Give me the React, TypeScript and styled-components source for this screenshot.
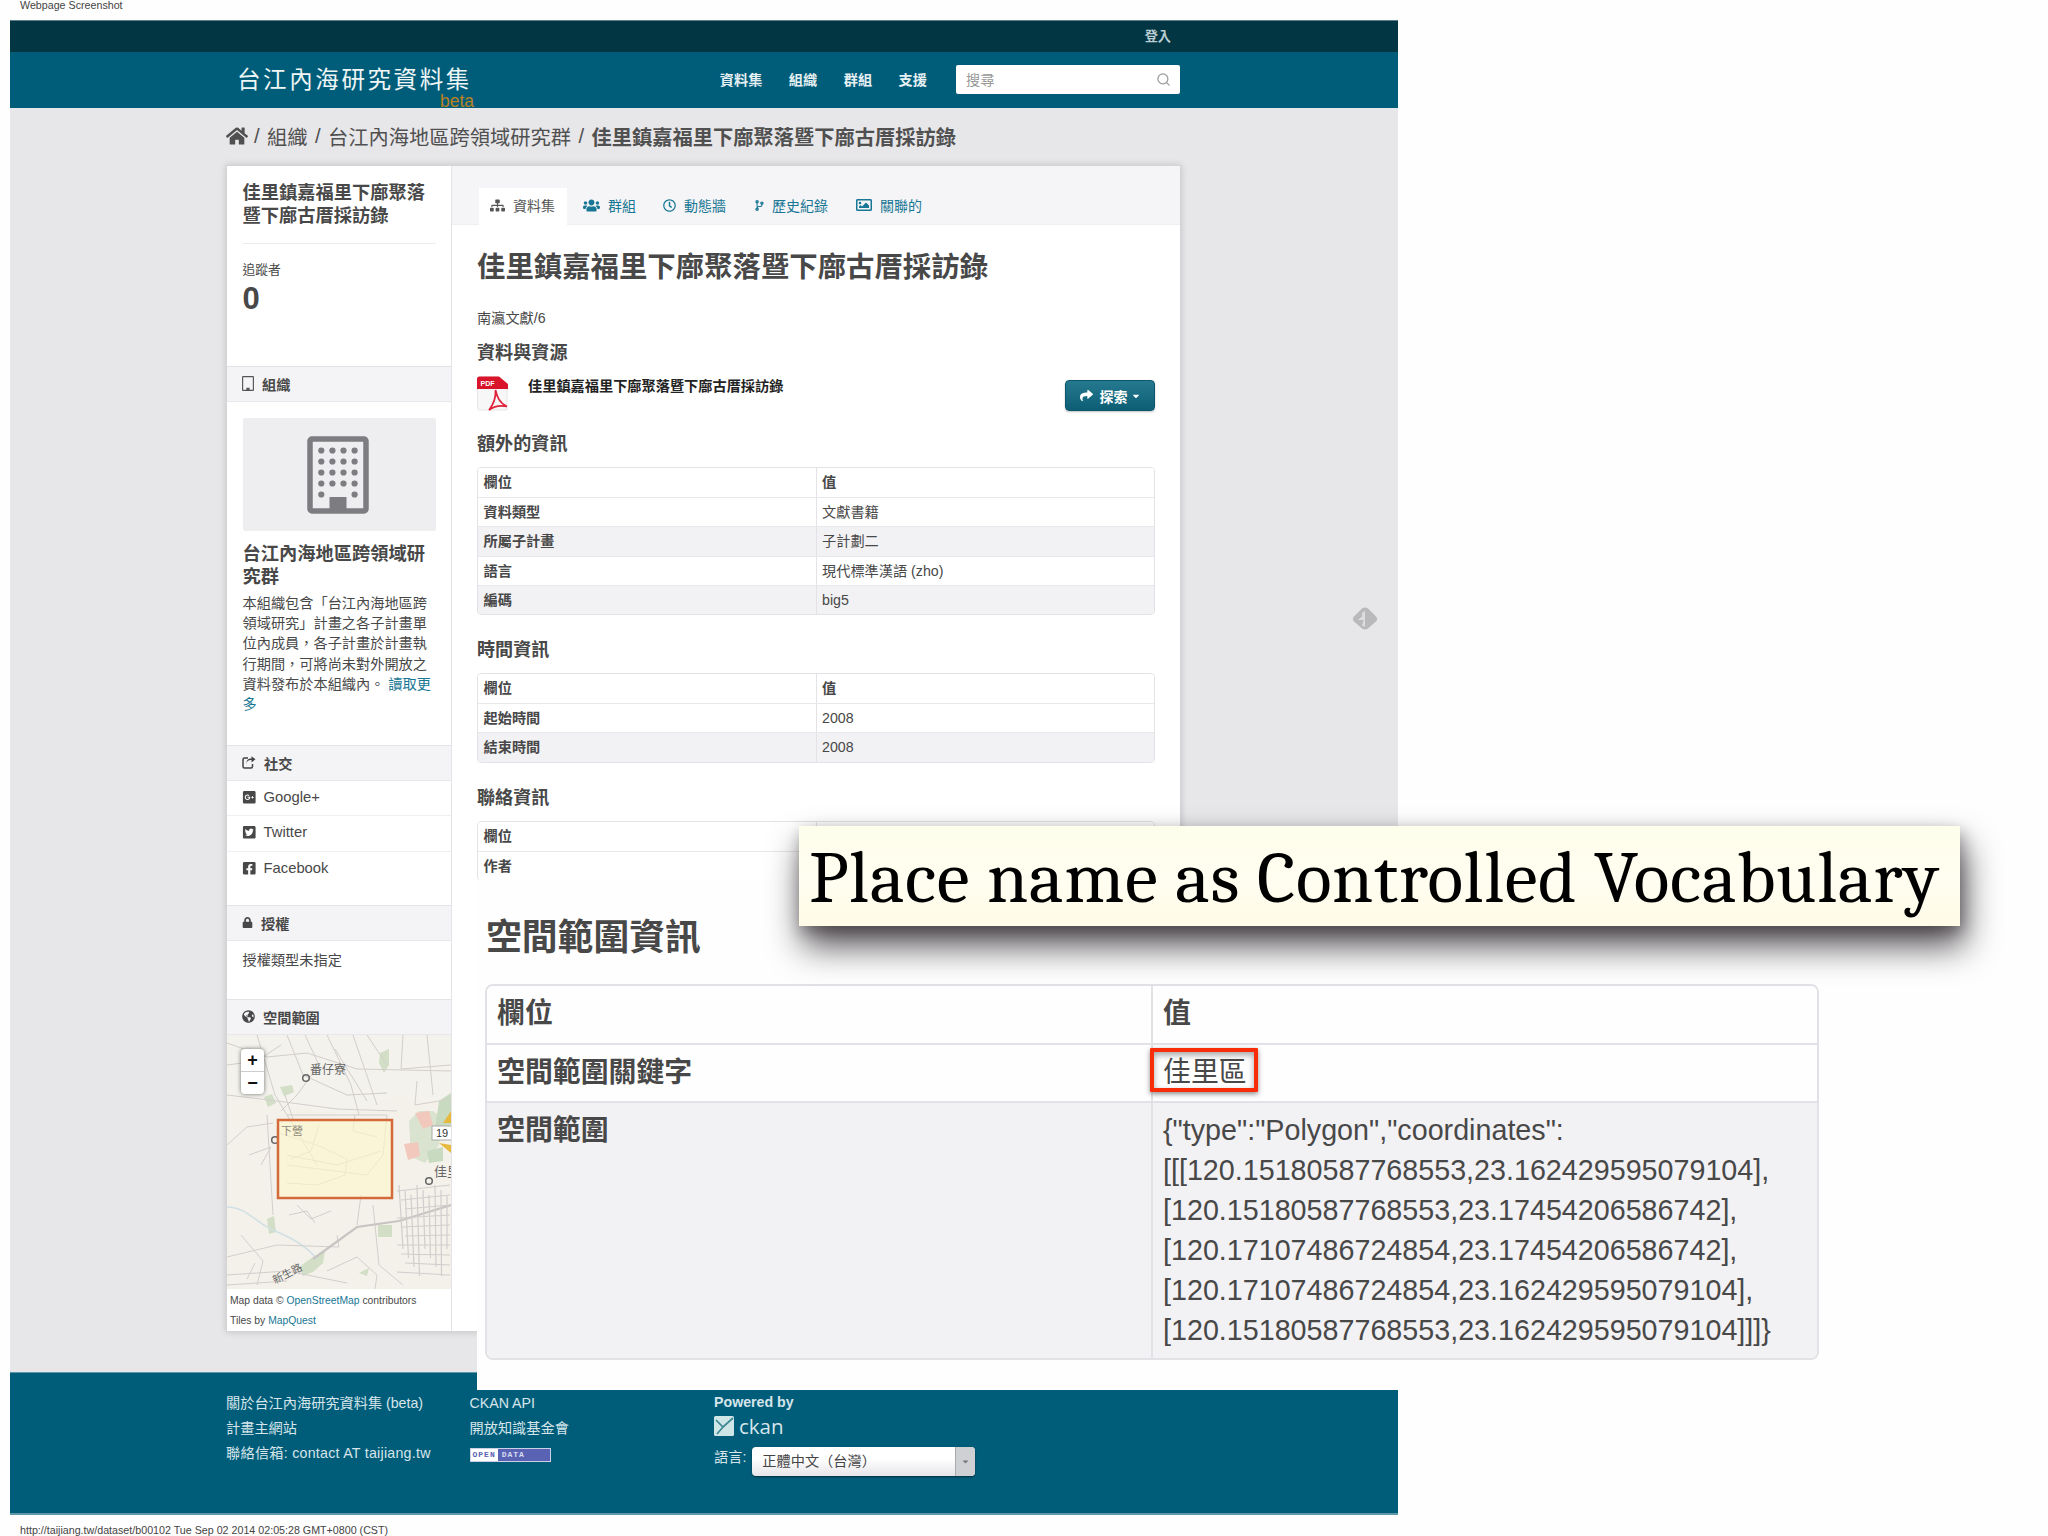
import React from 'react';
import styled, { createGlobalStyle } from 'styled-components';
import {
  FaHome, FaSitemap, FaUsers, FaRegClock, FaCodeBranch, FaRegImage, FaShare,
  FaGooglePlusSquare, FaTwitterSquare, FaFacebookSquare, FaLock, FaGlobeAmericas, FaCaretDown,
} from 'react-icons/fa';
import { FiSearch } from 'react-icons/fi';

const Global = createGlobalStyle`
  * { box-sizing: border-box; }
  body { margin: 0; background: #fff; overflow: hidden; }
`;

const Slide = styled.main`
  position: relative;
  width: 2048px;
  height: 1536px;
  overflow: hidden;
  display: flex;
  flex-direction: column;
  background: #fefefe;
  color: #484848;
  font-family: 'Liberation Sans', 'Noto Sans CJK TC', sans-serif;
  font-size: 14.2px;
`;

const PrintNote = styled.div<{ $h: number; $center: number }>`
  height: ${p => p.$h}px;
  padding-left: 20px;
  font-size: 10.7px;
  line-height: ${p => p.$center * 2}px;
  color: #444;
  white-space: nowrap;
`;

const Site = styled.div`
  width: 1388px;
  height: 1495px;
  margin-left: 10px;
  background: #e7e6e9;
  display: flex;
  flex-direction: column;
`;

const AccountBar = styled.div`
  height: 32px;
  flex: none;
  background: #033643;
  border-top: 1px solid #5b7d86;
  display: flex;
  justify-content: flex-end;
  padding-right: 227px;
  line-height: 31px;
  font-size: 13.2px;
  font-weight: 700;
  color: #b9cdd2;
`;

const Masthead = styled.header`
  height: 56px;
  flex: none;
  background: #005d7a;
  display: flex;
  justify-content: space-between;
  padding: 0 218px 0 227px;
`;

const Brand = styled.div`
  width: 240px;
  color: #eef6f6;
  font-size: 23.5px;
  letter-spacing: 2.6px;
  line-height: 30px;
  padding-top: 13px;
  white-space: nowrap;
`;

const Beta = styled.div`
  color: #b9821f;
  font-size: 17.5px;
  letter-spacing: 0;
  line-height: 13px;
  text-align: right;
  padding-right: 3px;
`;

const HeaderRight = styled.div`
  display: flex;
  padding-top: 13px;
`;

const Nav = styled.nav`
  display: flex;
  gap: 26.5px;
  margin-right: 29px;
  line-height: 30px;
  font-size: 14.2px;
  font-weight: 700;
  color: #e6f0f3;
`;

const Search = styled.div`
  width: 224px;
  height: 29px;
  background: #fff;
  border-radius: 2px;
  display: flex;
  align-items: center;
  justify-content: space-between;
  padding: 0 9px 1px 10px;
  color: #999;
`;

const Crumbs = styled.div`
  height: 58px;
  flex: none;
  padding: 0 0 2px 216px;
  display: flex;
  align-items: center;
  font-size: 20.25px;
  color: #505050;
  white-space: nowrap;
  svg { font-size: 22px; margin-right: -1.5px; }
  b { font-weight: 700; }
`;

const Slash = styled.span`
  width: 20.5px;
  text-align: center;
`;

const Card = styled.div`
  width: 953px;
  height: 1165px;
  flex: none;
  margin-left: 217px;
  background: #fff;
  box-shadow: 0 0 0 1px #d4d3d6, 0 0 7px 1px rgba(0, 0, 0, 0.16);
  display: flex;
`;

const Sidebar = styled.aside`
  width: 225px;
  flex: none;
  border-right: 1px solid #e4e3e7;
  display: flex;
  flex-direction: column;
`;

const Module = styled.section<{ $h: number; $pt?: number }>`
  height: ${p => p.$h}px;
  flex: none;
  padding: ${p => p.$pt ?? 0}px 15px 0 15.5px;
`;

const SideHead = styled.h3`
  height: 36px;
  flex: none;
  margin: 0;
  padding: 0 0 1px 15px;
  background: #f4f3f6;
  border-top: 1px solid #e3e2e6;
  border-bottom: 1px solid #e8e7eb;
  display: flex;
  align-items: center;
  gap: 8px;
  font-size: 14.2px;
  font-weight: 700;
`;

const SideTitle = styled.h2`
  margin: 0;
  font-size: 18.25px;
  font-weight: 700;
  line-height: 23.4px;
`;

const Followers = styled.dl`
  margin: 15px 0 0;
  border-top: 1px solid #ececef;
  padding-top: 16px;
  dt { font-size: 12.8px; line-height: 20px; }
  dd { margin: 0; font-size: 31px; font-weight: 700; line-height: 37px; }
`;

const OrgImage = styled.div`
  height: 113px;
  background: #eeedf0;
  border-radius: 2px;
  display: flex;
  justify-content: center;
  padding: 18px 3px 0 0;
  margin-bottom: 11px;
`;

const Blurb = styled.p`
  margin: 4px -4px 0 0;
  line-height: 20.3px;
  font-size: 14.2px;
`;

const Link = styled.a`
  color: #187794;
`;

const SocialItem = styled.div<{ $last?: boolean }>`
  height: 35.3px;
  flex: none;
  padding: 0 0 2px 15px;
  border-bottom: ${p => (p.$last ? 'none' : '1px solid #efeef1')};
  display: flex;
  align-items: center;
  gap: 7px;
  font-size: 14.8px;
  svg { font-size: 14.5px; }
`;

const MapBox = styled.div`
  height: 254px;
  flex: none;
  position: relative;
  svg.map { display: block; }
`;

const ZoomControl = styled.div`
  position: absolute;
  left: 14px;
  top: 14px;
  width: 23px;
  background: #fff;
  border-radius: 4px;
  box-shadow: 0 0 4px rgba(0, 0, 0, 0.55);
  font: 700 18px/22px 'Liberation Sans', sans-serif;
  text-align: center;
  color: #111;
  div + div { border-top: 1px solid #ccc; }
`;

const Attribution = styled.div`
  padding: 2px 0 0 3px;
  font-size: 10.35px;
  line-height: 20px;
  white-space: nowrap;
`;

const Main = styled.div`
  flex: 1;
  display: flex;
  flex-direction: column;
`;

const Tabs = styled.div`
  height: 59px;
  flex: none;
  background: #f5f4f7;
  border-bottom: 1px solid #efeef1;
  padding: 22px 0 0 27px;
  display: flex;
`;

const Tab = styled.div<{ $w: number; $gap?: number; $active?: boolean }>`
  width: ${p => p.$w}px;
  height: 37px;
  flex: none;
  padding-left: ${p => (p.$active ? 11 : 0)}px;
  padding-bottom: 3px;
  margin-right: ${p => (p.$active ? 16 : 0)}px;
  background: ${p => (p.$active ? '#fff' : 'transparent')};
  color: ${p => (p.$active ? '#555' : '#187794')};
  display: flex;
  align-items: center;
  gap: ${p => p.$gap ?? 8}px;
  font-size: 14px;
  white-space: nowrap;
`;

const Content = styled.article`
  padding: 0 24px 0 25px;
`;

const Title = styled.h1`
  margin: 23px 0 0;
  font-size: 28.4px;
  font-weight: 700;
  line-height: 38px;
  white-space: nowrap;
`;

const Notes = styled.p`
  margin: 22px 0 0;
  line-height: 20px;
`;

const H2 = styled.h2<{ $mt: number }>`
  margin: ${p => p.$mt}px 0 0;
  font-size: 18.1px;
  font-weight: 700;
  line-height: 24px;
`;

const Resource = styled.div`
  height: 52px;
  padding-top: 11px;
  display: flex;
  color: #222;
  svg.pdf { flex: none; }
  strong { font-weight: 700; margin-left: 20px; line-height: 21px; flex: 1; }
`;

const Explore = styled.button`
  width: 90px;
  height: 31px;
  margin: 4px 1px 0 0;
  padding: 0;
  border: 1px solid #0c566b;
  border-radius: 4px;
  background: linear-gradient(#25798f, #0d5e75);
  box-shadow: 0 1px 2px rgba(0, 0, 0, 0.25);
  color: #fff;
  font: 700 14px 'Liberation Sans', 'Noto Sans CJK TC', sans-serif;
  display: flex;
  align-items: center;
  justify-content: center;
  gap: 7px;
  svg + span + svg { margin-left: -4px; font-size: 10px; }
`;

const Table = styled.div`
  margin-top: 11px;
  width: 678px;
  border: 1px solid #e4e2e6;
  border-radius: 4px;
  overflow: hidden;
`;

const Row = styled.div<{ $striped?: boolean; $head?: boolean }>`
  height: 29.2px;
  display: grid;
  grid-template-columns: 338px 1fr;
  line-height: 28px;
  background: ${p => (p.$striped ? '#f2f1f4' : '#fff')};
  & + & { border-top: 1px solid #e9e7eb; }
  span { padding-left: 5.500px; }
  span:first-child { font-weight: 700; }
  span + span { border-left: 1px solid #e4e2e6; padding-left: 5px; font-weight: ${p => (p.$head ? 700 : 400)}; }
`;

const Footer = styled.footer`
  height: 143px;
  flex: none;
  margin-top: auto;
  background: #005d7a;
  border-top: 1px solid #5f98ab;
  border-bottom: 2px solid #5f98ab;
  padding: 17.500px 0 0 216px;
  display: grid;
  grid-template-columns: 243.500px 244.5px 1fr;
  color: #d6e5ea;
  font-size: 14.2px;
  line-height: 25px;
  white-space: nowrap;
`;

const FooterCol = styled.div`
  b { display: block; line-height: 23px; }
`;

const Contact = styled.span`
  letter-spacing: 0.26px;
`;

const OpenData = styled.div`
  width: 81px;
  height: 14px;
  margin-top: 7px;
  border: 1px solid #c9cfe4;
  background: #5a62b3;
  display: flex;
  font: 700 8px/12px 'Liberation Mono', monospace;
  letter-spacing: 1px;
  color: #d8dcf2;
  span { background: #fff; color: #5a62b3; padding: 0 2px; margin-right: 4px; }
`;

const Ckan = styled.div`
  display: flex;
  align-items: center;
  gap: 5px;
  height: 25px;
  font-family: 'Open Sans', sans-serif;
  font-size: 20.5px;
`;

const Lang = styled.div`
  display: flex;
  gap: 6px;
  margin-top: 8px;
  line-height: 21px;
`;

const Select = styled.div`
  width: 223px;
  height: 29px;
  border-radius: 4px;
  background: linear-gradient(#fff 40%, #e6e6ea);
  box-shadow: 0 1px 2px rgba(0, 0, 0, 0.5);
  color: #444;
  display: flex;
  justify-content: space-between;
  padding-left: 10px;
  line-height: 28px;
  overflow: hidden;
  i { width: 20px; background: #cfd0d4; border-left: 1px solid #aaa; display: grid; place-items: center; font-size: 9px; color: #777; }
`;

const FeedbackMark = styled.svg`
  position: absolute;
  left: 1351px;
  top: 606px;
`;

/* Enlarged excerpt laid over the page */
const Excerpt = styled.section`
  position: absolute;
  left: 477px;
  top: 880px;
  width: 1400px;
  height: 510px;
  background: #fefefe;
  padding: 34px 0 0 8px;
  h2 { margin: 0 0 22px 1px; font-size: 35.8px; font-weight: 700; line-height: 48px; }
`;

const BigTable = styled.div`
  width: 1334px;
  height: 376px;
  border: 2px solid #e2e1e5;
  border-radius: 8px;
  overflow: hidden;
  font-size: 27.9px;
`;

const BigRow = styled.div<{ $h: number; $striped?: boolean; $head?: boolean }>`
  height: ${p => p.$h}px;
  display: grid;
  grid-template-columns: 664px 1fr;
  line-height: 40px;
  background: ${p => (p.$striped ? '#f2f1f4' : '#fefefe')};
  & + & { border-top: 2px solid #e2e1e5; }
  > div { padding: 8px 0 0 10px; }
  > div:first-child { font-weight: 700; }
  > div + div { border-left: 2px solid #e2e1e5; font-weight: ${p => (p.$head ? 700 : 400)}; }
`;

const Coords = styled.pre`
  margin: -1px 0 0;
  font: 28.7px/40px 'Liberation Sans', sans-serif;
`;

const RedBox = styled.div`
  position: absolute;
  left: 1150px;
  top: 1048px;
  width: 108px;
  height: 44px;
  border: 4px solid #f92c0a;
  border-radius: 1px;
  box-shadow: 0 2px 5px rgba(0, 0, 0, 0.45), inset 0 3px 6px rgba(0, 0, 0, 0.35);
`;

const Callout = styled.div`
  position: absolute;
  left: 799px;
  top: 826px;
  width: 1161px;
  height: 100px;
  background: linear-gradient(#fefeec, #fffdf0 60%, #fffbe6);
  box-shadow: 4px 20px 34px rgba(20, 14, 20, 0.72), 2px 6px 14px rgba(20, 14, 20, 0.3);
  color: #000;
  font-family: Cambria, Caladea, 'Liberation Serif', serif;
  font-size: 74px;
  letter-spacing: 0.6px;
  line-height: 104px;
  padding-left: 10px;
  white-space: nowrap;
`;

const TITLE = '佳里鎮嘉福里下廍聚落暨下廍古厝採訪錄';

const Building = ({ w, h, small }: { w: number; h: number; small?: boolean }) => (
  <svg width={w} height={h} viewBox="0 0 62 78">
    <rect x="3" y="3" width="56" height="72" rx="2" fill="none" stroke={small ? '#555' : '#7d7c80'} strokeWidth={small ? 6 : 5.5} />
    {!small && [0, 1, 2, 3, 4].map(r => [0, 1, 2, 3].map(c => (
      (r < 4 || c === 0 || c === 3) && <circle key={`${r}${c}`} cx={14.3 + c * 11.1} cy={14.5 + r * 11} r="3.1" fill="#7d7c80" />
    )))}
    <rect x="22.5" y="61" width="17" height="15" fill={small ? '#555' : '#7d7c80'} />
  </svg>
);

const PdfIcon = () => (
  <svg className="pdf" width="31" height="35" viewBox="0 0 31 35">
    <path d="M.5 3V32a2 2 0 0 0 2 2H30V10L20 1H3A2.500 2.500 0 0 0 .5 3Z" fill="#f8f7f8" stroke="#e6e5e7" />
    <path d="M0 13V3A2.500 2.500 0 0 1 2.500.5H22L31 8V13Z" fill="#d9152b" />
    <text x="3.500" y="9.500" fontSize="7" fontWeight="700" fontFamily="Liberation Sans, sans-serif" fill="#fff">PDF</text>
    <path d="M18.500 14C20 20 22 27 30 30.500C23 29 16 31 12 34C16 29 19 22 18.500 14Z" fill="none" stroke="#e0233a" strokeWidth="1.700" />
  </svg>
);

const ShareIcon = () => (
  <svg width="14" height="13" viewBox="0 0 14 13" fill="none" stroke="#444" strokeWidth="1.500">
    <path d="M6 2H2.500A1.500 1.500 0 0 0 1 3.500V10.500A1.500 1.500 0 0 0 2.500 12H9A1.500 1.500 0 0 0 10.500 10.500V8" />
    <path d="M4.500 8C4.500 5 6.500 4 9.500 4V6.500L13.500 3.200L9.500.3V2.500C6 2.500 4 4.500 4.500 8Z" fill="#444" stroke="none" />
  </svg>
);

const streets: string[] = [];
for (let i = 0; i < 10; i++) {
  streets.push(`M${172 + i * 6} ${150 + (i % 3) * 5}L${176 + i * 5.5} ${214 + (i % 4) * 9}`);
  streets.push(`M${170 + (i % 3) * 4} ${156 + i * 9}L223 ${150 + i * 10}`);
}

const AreaMap = () => (
  <svg className="map" width="224" height="254" viewBox="0 0 224 254">
    <rect width="224" height="254" fill="#f4f1ea" />
    <path d="M0 60L60 70L120 80L170 60L224 70V0H0Z" fill="#f3f2ec" />
    <g fill="#d3dec6">
      <path d="M153 18l9-4v16l-5 8-5-10zM37 62l8-3 4 9-8 4zM53 52l12-2 2 7-10 4zM40 184l7-3 2 16-7 2z" />
      <path d="M72 232l14-10 12-6-2 12-10 9-10 4zM132 238l10-5-2 8zM151 190h14v12h-14z" />
      <path d="M182 86l10-10 14 0 10 8-4 26-14 18-14-6z" fill="#d9e3d0" />
      <path d="M212 66l12-8v36h-16zM200 116l16-4v14l-14 2z" fill="#c8dbc0" />
    </g>
    <path d="M188 78l14-2 4 14-10 4zM177 109l14-2 2 14-12 4z" fill="#f2c8bc" />
    <path d="M224 76l-8 12h8zM212 108l12 2v8z" fill="#e7b93f" />
    <path d="M0 172C20 172 28 188 48 196S80 212 90 224" fill="none" stroke="#cfe0e4" strokeWidth="1.500" />
    <g fill="none" stroke="#d3cecc" strokeWidth="1">
      <path d="M0 8L40 22L80 18L130 34L224 36M30 0L48 60L90 130M60 0L76 40L120 60L160 58M100 0L124 50L132 80M126 0L150 70M0 60L50 66L110 74L170 76M0 30L30 26L54 10M78 0L92 30L70 60L54 76M108 14L140 66M176 0L174 34L224 30M190 46L188 70L224 64M140 0L160 30M200 0L206 60" />
      <path d="M40 80L46 180M0 110L20 92L46 88M34 130L44 112L22 120M0 240L60 236L120 248M0 222L50 210M14 200L36 226L30 250M52 98L90 110L120 124L118 140L90 150L60 148M58 60L66 84M70 170L84 184L104 176M134 160L130 190M110 200L112 212L50 210M100 236L130 222L150 240L148 254M146 170L152 230L176 250M62 180L80 176L88 188M0 250L60 246M20 244L28 228M60 120L110 130L154 116" />
      <path d="M60 80H160L156 120L140 140L60 130M92 90L84 116L64 124M128 80L126 96L150 102" />
    </g>
    <path d="M86 224L130 192L172 186L224 170" fill="none" stroke="#c8c4c3" strokeWidth="2.200" />
    <path d={streets.join('')} fill="none" stroke="#d0cdcd" strokeWidth="1.200" />
    <g fill="none" stroke="#666" strokeWidth="1.500">
      <circle cx="79" cy="43" r="3.300" />
      <circle cx="48" cy="105" r="3.300" />
      <circle cx="202" cy="146" r="3.300" />
    </g>
    <rect x="51" y="85" width="114" height="78" fill="#fff8cb" fillOpacity="0.6" stroke="#d4693a" strokeWidth="2.500" />
    <g fontFamily="Noto Sans CJK TC, sans-serif" fill="#666">
      <text x="83" y="39" fontSize="12">番仔寮</text>
      <text x="54" y="100" fontSize="11" fill="#8f8c78">下營</text>
      <text x="207" y="141" fontSize="13">佳里</text>
      <text x="48" y="249" fontSize="10.500" transform="rotate(-27 48 249)">新生路</text>
    </g>
    <rect x="205" y="91" width="24" height="14" fill="#fff" stroke="#aaa" />
    <text x="209" y="102" fontSize="11" fontFamily="Liberation Sans, sans-serif" fill="#333">19</text>
  </svg>
);

const DataTable = ({ rows }: { rows: [string, string][] }) => (
  <Table>
    {rows.map(([k, v], i) => (
      <Row key={k} $head={i === 0} $striped={i > 0 && i % 2 === 0}><span>{k}</span><span>{v}</span></Row>
    ))}
  </Table>
);

export default function App() {
  return (
    <Slide>
      <Global />
      <PrintNote $h={20} $center={5}>Webpage Screenshot</PrintNote>
      <Site>
        <AccountBar>登入</AccountBar>
        <Masthead>
          <Brand>台江內海研究資料集<Beta>beta</Beta></Brand>
          <HeaderRight>
            <Nav><span>資料集</span><span>組織</span><span>群組</span><span>支援</span></Nav>
            <Search>搜尋<FiSearch size={15} /></Search>
          </HeaderRight>
        </Masthead>
        <Crumbs>
          <FaHome /><Slash>/</Slash><span>組織</span><Slash>/</Slash>
          <span>台江內海地區跨領域研究群</span><Slash>/</Slash><b>{TITLE}</b>
        </Crumbs>
        <Card>
          <Sidebar>
            <Module $h={200} $pt={15}>
              <SideTitle>{TITLE}</SideTitle>
              <Followers><dt>追蹤者</dt><dd>0</dd></Followers>
            </Module>
            <SideHead><Building w={12} h={15} small />組織</SideHead>
            <Module $h={343} $pt={16}>
              <OrgImage><Building w={62} h={78} /></OrgImage>
              <SideTitle>台江內海地區跨領域研究群</SideTitle>
              <Blurb>本組織包含「台江內海地區跨領域研究」計畫之各子計畫單位內成員，各子計畫於計畫執行期間，可將尚未對外開放之資料發布於本組織內。 <Link>讀取更多</Link></Blurb>
            </Module>
            <SideHead><ShareIcon />社交</SideHead>
            <SocialItem><FaGooglePlusSquare />Google+</SocialItem>
            <SocialItem><FaTwitterSquare />Twitter</SocialItem>
            <SocialItem $last><FaFacebookSquare />Facebook</SocialItem>
            <Module $h={18.5} />
            <SideHead><FaLock size={11} />授權</SideHead>
            <Module $h={58} $pt={8}>授權類型未指定</Module>
            <SideHead><FaGlobeAmericas size={13} />空間範圍</SideHead>
            <MapBox>
              <AreaMap />
              <ZoomControl><div>+</div><div>−</div></ZoomControl>
            </MapBox>
            <Attribution>
              Map data © <Link>OpenStreetMap</Link> contributors<br />Tiles by <Link>MapQuest</Link>
            </Attribution>
          </Sidebar>
          <Main>
            <Tabs>
              <Tab $w={88} $active><FaSitemap size={15} />資料集</Tab>
              <Tab $w={80} $gap={8}><FaUsers size={17} />群組</Tab>
              <Tab $w={91} $gap={8}><FaRegClock size={13} />動態牆</Tab>
              <Tab $w={102} $gap={7}><FaCodeBranch size={11} />歷史紀錄</Tab>
              <Tab $w={80} $gap={8}><FaRegImage size={16} />關聯的</Tab>
            </Tabs>
            <Content>
              <Title>{TITLE}</Title>
              <Notes>南瀛文獻/6</Notes>
              <H2 $mt={13}>資料與資源</H2>
              <Resource>
                <PdfIcon />
                <strong>{TITLE}</strong>
                <Explore><FaShare size={13} /><span>探索</span><FaCaretDown /></Explore>
              </Resource>
              <H2 $mt={15}>額外的資訊</H2>
              <DataTable rows={[['欄位', '值'], ['資料類型', '文獻書籍'], ['所屬子計畫', '子計劃二'], ['語言', '現代標準漢語 (zho)'], ['編碼', 'big5']]} />
              <H2 $mt={23}>時間資訊</H2>
              <DataTable rows={[['欄位', '值'], ['起始時間', '2008'], ['結束時間', '2008']]} />
              <H2 $mt={23}>聯絡資訊</H2>
              <DataTable rows={[['欄位', '值'], ['作者', '']]} />
            </Content>
          </Main>
        </Card>
        <Footer>
          <FooterCol>關於台江內海研究資料集 (beta)<br />計畫主網站<br /><Contact>聯絡信箱: contact AT taijiang.tw</Contact></FooterCol>
          <FooterCol>CKAN API<br />開放知識基金會<OpenData><span>OPEN</span>DATA</OpenData></FooterCol>
          <FooterCol>
            <b>Powered by</b>
            <Ckan>
              <svg width="20" height="20" viewBox="0 0 20 20">
                <rect width="20" height="20" rx="1.500" fill="#cfe6e6" />
                <path d="M2 4L9 11L19 2M9 11L3 18" fill="none" stroke="#3f8795" strokeWidth="1.700" />
              </svg>
              ckan
            </Ckan>
            <Lang><span>語言:</span><Select>正體中文（台灣）<i><FaCaretDown /></i></Select></Lang>
          </FooterCol>
        </Footer>
      </Site>
      <PrintNote $h={21} $center={15}>http://taijiang.tw/dataset/b00102 Tue Sep 02 2014 02:05:28 GMT+0800 (CST)</PrintNote>

      <FeedbackMark width="28" height="26" viewBox="0 0 28 26">
        <path d="M11 2.500Q14 .5 17 2.500L25.500 11Q27 13 25.500 15L17 22.500Q14 24.500 11 22.500L2.500 15Q1 13 2.500 11Z" fill="#b9b8ba" />
        <path d="M14 4.500V21L11 19.500L12.500 14H7L11.500 10L10.500 8Z" fill="#dddcde" />
      </FeedbackMark>

      <Excerpt>
        <h2>空間範圍資訊</h2>
        <BigTable>
          <BigRow $h={57} $head><div>欄位</div><div>值</div></BigRow>
          <BigRow $h={58}><div>空間範圍關鍵字</div><div>佳里區</div></BigRow>
          <BigRow $h={259} $striped>
            <div>空間範圍</div>
            <div>
              <Coords>{`{"type":"Polygon","coordinates":
[[[120.15180587768553,23.162429595079104],
[120.15180587768553,23.17454206586742],
[120.17107486724854,23.17454206586742],
[120.17107486724854,23.162429595079104],
[120.15180587768553,23.162429595079104]]]}`}</Coords>
            </div>
          </BigRow>
        </BigTable>
      </Excerpt>
      <RedBox />
      <Callout>Place name as Controlled Vocabulary</Callout>
    </Slide>
  );
}
